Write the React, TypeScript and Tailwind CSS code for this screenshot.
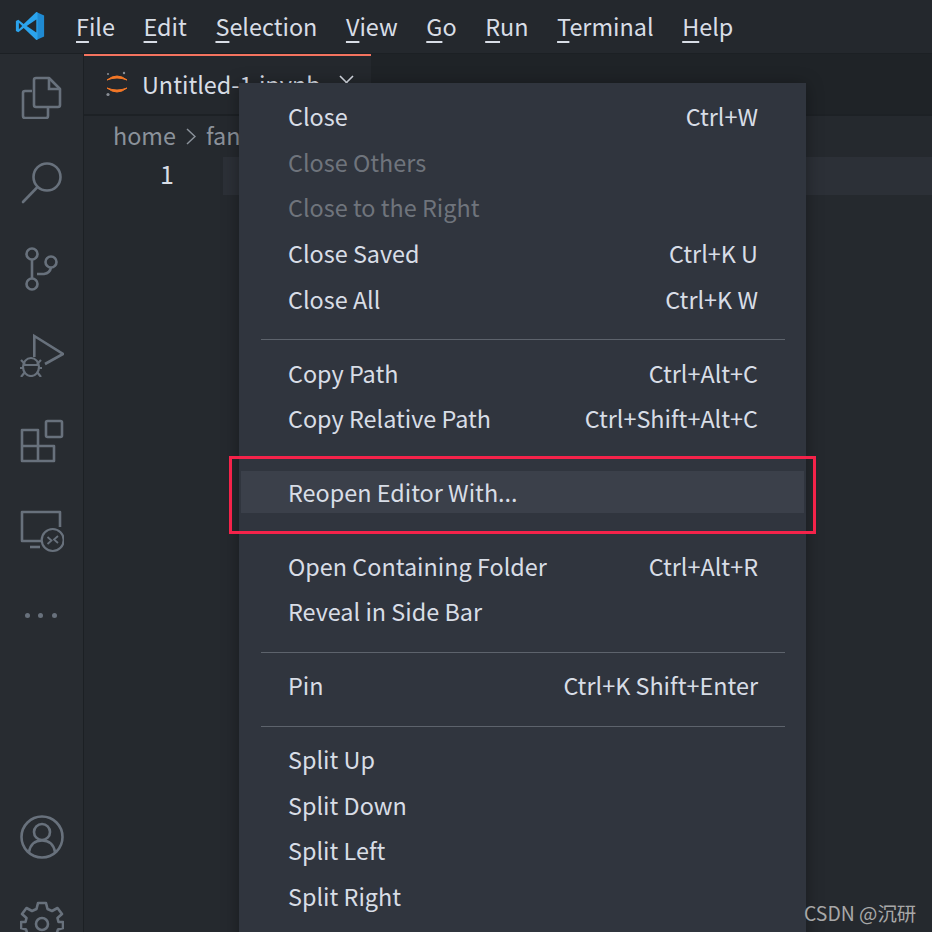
const font = { fontFamily: '"Noto Sans CJK SC", "Noto Sans", sans-serif' };

const menuBar: [string, string][] = [
  ["F", "ile"],
  ["E", "dit"],
  ["S", "election"],
  ["V", "iew"],
  ["G", "o"],
  ["R", "un"],
  ["T", "erminal"],
  ["H", "elp"],
];

type Item = { label: string; keys?: string; disabled?: boolean; active?: boolean };

const groups: Item[][] = [
  [
    { label: "Close", keys: "Ctrl+W" },
    { label: "Close Others", disabled: true },
    { label: "Close to the Right", disabled: true },
    { label: "Close Saved", keys: "Ctrl+K U" },
    { label: "Close All", keys: "Ctrl+K W" },
  ],
  [
    { label: "Copy Path", keys: "Ctrl+Alt+C" },
    { label: "Copy Relative Path", keys: "Ctrl+Shift+Alt+C" },
  ],
  [{ label: "Reopen Editor With...", active: true }],
  [
    { label: "Open Containing Folder", keys: "Ctrl+Alt+R" },
    { label: "Reveal in Side Bar" },
  ],
  [{ label: "Pin", keys: "Ctrl+K Shift+Enter" }],
  [
    { label: "Split Up" },
    { label: "Split Down" },
    { label: "Split Left" },
    { label: "Split Right" },
  ],
];

function VsCodeLogo() {
  return (
    <svg width="30" height="30" viewBox="0 0 100 100" className="ml-[15px] mt-[-2px] shrink-0">
      <path d="M71 3 L97 15 V85 L71 97 Z" fill="#1f8ad2" />
      <path d="M71 3 L29 43 L11 29 L3 33 V67 L11 71 L29 57 L71 97 L75 95 V5 Z" fill="#2ba3ec" />
      <path d="M71 28 L39 50 L71 72 Z" fill="#24282d" />
      <path d="M13 39 L24 50 L13 61 Z" fill="#24282d" />
    </svg>
  );
}

const iconProps = {
  width: 44,
  height: 44,
  viewBox: "0 0 44 44",
  fill: "none",
  stroke: "#68717c",
  strokeWidth: 2.6,
} as const;

function ActivityBar() {
  return (
    <div className="flex h-full w-[84px] shrink-0 flex-col items-center overflow-hidden border-r border-[#1c2024] bg-[#282c31]">
      <div className="flex h-[86px] w-full shrink-0 items-center justify-center">
        <svg {...iconProps}>
          <path d="M12 16 H5 Q3 16 3 18 V41 Q3 43 5 43 H26 Q28 43 28 41 V33" strokeLinejoin="round" />
          <path d="M16 3 H29 L40 14 V30 Q40 32 38 32 H16 Q14 32 14 30 V5 Q14 3 16 3 Z" strokeLinejoin="round" />
          <path d="M29 3 V14 H40" />
        </svg>
      </div>
      <div className="flex h-[86px] w-full shrink-0 items-center justify-center">
        <svg {...iconProps}>
          <circle cx="27" cy="16" r="13.5" />
          <path d="M17.5 26 L3 41" strokeLinecap="round" />
        </svg>
      </div>
      <div className="flex h-[86px] w-full shrink-0 items-center justify-center">
        <svg {...iconProps}>
          <circle cx="12" cy="7" r="5.5" />
          <circle cx="12" cy="37" r="5.5" />
          <circle cx="31" cy="15" r="5.5" />
          <path d="M12 12.5 V31.5 M17 27 H24 Q30 26 31 20.5" />
        </svg>
      </div>
      <div className="flex h-[86px] w-full shrink-0 items-center justify-center">
        <svg {...iconProps}>
          <path d="M14.3 24 V3 L43 21 L25 31" />
          <g strokeWidth="2.2">
            <ellipse cx="11" cy="34" rx="8" ry="9" />
            <path d="M3 32 H19 M1 27 L5 31 M21 27 L17 31 M0 35 H3 M19 35 H22 M1 44 L5 39 M21 44 L17 39" />
          </g>
        </svg>
      </div>
      <div className="flex h-[86px] w-full shrink-0 items-center justify-center">
        <svg {...iconProps}>
          <path d="M2 11 H18 V42 H2 Z M2 27 H34 V42 H18" strokeLinejoin="round" />
          <rect x="26" y="2" width="16" height="16" rx="1.5" />
        </svg>
      </div>
      <div className="flex h-[86px] w-full shrink-0 items-center justify-center pt-[10px]">
        <svg {...iconProps}>
          <path d="M21 31 H2 V2 H40 V17" strokeLinejoin="round" />
          <path d="M10 37 H20" />
          <circle cx="32.7" cy="30" r="11" strokeWidth="2.2" />
          <path d="M27.5 27 L31.5 30.5 L27.5 34 M38 26 L34 29.5 L38 33" strokeWidth="1.8" />
        </svg>
      </div>
      <div className="flex h-[86px] w-full shrink-0 items-center justify-center gap-[8.5px] pr-[2px] pt-[5px]">
        <div className="h-[5px] w-[5px] rounded-full bg-[#68717c]" />
        <div className="h-[5px] w-[5px] rounded-full bg-[#68717c]" />
        <div className="h-[5px] w-[5px] rounded-full bg-[#68717c]" />
      </div>
      <div className="flex-1" />
      <div className="flex h-[86px] w-full shrink-0 items-center justify-center">
        <svg {...iconProps}>
          <circle cx="22" cy="22" r="20.5" />
          <circle cx="22" cy="17" r="8" />
          <path d="M9 37 Q11 25.5 22 25.5 Q33 25.5 35 37" />
        </svg>
      </div>
      <div className="mb-[-34px] flex h-[86px] w-full shrink-0 items-center justify-center">
        <svg {...iconProps} strokeLinejoin="round">
          <path d="M18 2 H26 L27.5 8 L32 10 L37.5 7 L42 13 L37.5 17 L38.5 21 H43 V27 L38 28.5 L36.5 33 L40 37.5 L34.5 42 L30 38.5 L26 40 L25 44 H19 L18 40 L14 38.5 L9.5 42 L4 37.5 L7.5 33 L6 28.5 L1 27 V21 L5.5 21 L6.5 17 L2 13 L6.5 7 L12 10 L16.5 8 Z" />
          <circle cx="22" cy="23" r="6" />
        </svg>
      </div>
    </div>
  );
}

function ContextMenu() {
  return (
    <div className="absolute left-[239px] top-[83px] w-[567px] bg-[#30353e] pb-[40px] pt-[10.5px] shadow-[0_2px_16px_rgba(0,0,0,0.35)]">
      {groups.map((group, i) => (
        <div key={i}>
          {i > 0 && <div className="mb-[9.75px] ml-[22px] mr-[21px] mt-[17.5px] h-px bg-[#5d636c]" />}
          {group.map((item) => (
            <div key={item.label} className="flex h-[45.6px] items-center px-[2px]">
              <div
                className={`flex h-[42px] w-full items-center justify-between pl-[47px] pr-[46px] text-[23.4px] leading-[42px] ${
                  item.active ? "bg-[#3b404a]" : ""
                } ${item.disabled ? "text-[#6f747c]" : "text-[#d8dde6]"}`}
              >
                <span>{item.label}</span>
                {item.keys && <span>{item.keys}</span>}
              </div>
            </div>
          ))}
        </div>
      ))}
    </div>
  );
}

export default function App() {
  return (
    <div className="relative flex h-[932px] w-[932px] flex-col overflow-hidden bg-[#25292e]" style={font}>
      <div className="flex h-[54px] shrink-0 items-center border-b border-[#1c2024] bg-[#24282d] text-[23.4px] leading-[34px] text-[#d8dde6]">
        <VsCodeLogo />
        <div className="ml-[31px] mt-[-2px] flex">
          {menuBar.map(([first, rest]) => (
            <div key={first} className="px-[14.3px] first:pl-[0px]">
              <span className="underline decoration-2 underline-offset-[5px]">{first}</span>
              {rest}
            </div>
          ))}
        </div>
      </div>

      <div className="flex min-h-0 flex-1">
        <ActivityBar />
        <div className="flex min-w-0 flex-1 flex-col">
          <div className="flex h-[62px] shrink-0 border-b-2 border-[#1d2125] bg-[#1f2327]">
            <div className="flex w-[287px] items-center border-t-[2px] border-[#f4735f] bg-[#24282d] pl-[22px] text-[23.4px] text-[#d8dde6]">
              <svg width="22" height="26" viewBox="0 0 22 26" className="mt-[-2px] shrink-0">
                <path d="M1 9 Q11 1 21 9 Q11 5 1 9 Z M1 17 Q11 25 21 17 Q11 21 1 17 Z" fill="#f37726" stroke="#f37726" strokeWidth="1" />
                <circle cx="18" cy="2" r="1.2" fill="#8a8f96" />
                <circle cx="2" cy="3" r="1" fill="#8a8f96" />
                <circle cx="2" cy="23.5" r="1.6" fill="#8a8f96" />
              </svg>
              <span className="ml-[14px] mt-[-2px] whitespace-nowrap leading-[34px]">Untitled-1.ipynb</span>
              <svg width="15" height="15" viewBox="0 0 15 15" className="ml-[18px] mt-[-5px] shrink-0" stroke="#d8dde6" strokeWidth="1.6" fill="none">
                <path d="M1 1 L14 14 M14 1 L1 14" />
              </svg>
            </div>
          </div>
          <div className="flex h-[41px] shrink-0 items-center pl-[29px] text-[23.4px] leading-[34px] text-[#8b929b]">
            <span className="mt-[-3px]">home</span>
            <svg width="10" height="17" viewBox="0 0 10 17" className="mx-[10px] mt-[-1px]" fill="none" stroke="#8b929b" strokeWidth="1.5">
              <path d="M1 1 L9 8.5 L1 16" />
            </svg>
            <span className="mt-[-3px]">fan</span>
          </div>
          <div className="flex h-[38px] shrink-0 items-center">
            <div className="mt-[-6px] w-[139px] pr-[49px] text-right text-[25px] leading-[34px] text-[#d8dde6]">1</div>
            <div className="h-full flex-1 bg-[#2c3037]" />
          </div>
        </div>
      </div>

      <ContextMenu />

      <div className="absolute left-[229px] top-[456px] h-[78px] w-[587px] border-[3px] border-[#f5234a]" />
      <div className="absolute left-[804px] top-[899px] text-[19.4px] leading-[28px] text-[#a8a8a8]">CSDN @沉研</div>
    </div>
  );
}
